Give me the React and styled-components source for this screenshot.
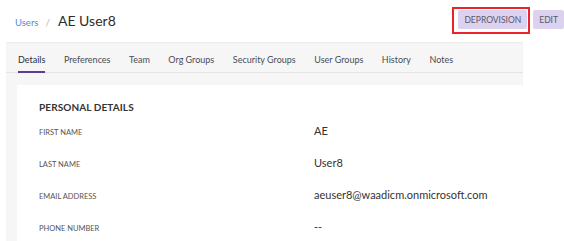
import React from "react";
import styled, { createGlobalStyle } from "styled-components";

const GlobalStyle = createGlobalStyle`
  body {
    margin: 0;
    background: #ffffff;
    font-family: Lato, "Open Sans", sans-serif;
  }
`;

const tabs = [
  "Details",
  "Preferences",
  "Team",
  "Org Groups",
  "Security Groups",
  "User Groups",
  "History",
  "Notes",
];

const fields = [
  { label: "First Name", value: "AE" },
  { label: "Last Name", value: "User8" },
  { label: "Email Address", value: "aeuser8@waadicm.onmicrosoft.com" },
  { label: "Phone Number", value: "--" },
];

export default function App() {
  return (
    <>
      <GlobalStyle />
      <StyledPage>
        <StyledHeader>
          <StyledCrumbs>
            <StyledCrumbLink>Users</StyledCrumbLink>
            <StyledSlash>/</StyledSlash>
            <StyledTitle>AE User8</StyledTitle>
          </StyledCrumbs>
          <StyledActions>
            <StyledHighlight>
              <StyledButton>Deprovision</StyledButton>
            </StyledHighlight>
            <StyledButton $offset={3}>Edit</StyledButton>
          </StyledActions>
        </StyledHeader>
        <StyledPanel>
          <StyledTabBar>
            {tabs.map((t, i) => (
              <StyledTab key={t} $active={i === 0}>
                {t}
              </StyledTab>
            ))}
          </StyledTabBar>
          <StyledCard>
            <StyledSectionTitle>Personal Details</StyledSectionTitle>
            {fields.map((f) => (
              <StyledRow key={f.label}>
                <StyledLabel>{f.label}</StyledLabel>
                <StyledValue>{f.value}</StyledValue>
              </StyledRow>
            ))}
          </StyledCard>
        </StyledPanel>
      </StyledPage>
    </>
  );
}

const StyledPage = styled.div`
  width: 564px;
  height: 241px;
  overflow: hidden;
`;

const StyledHeader = styled.div`
  display: flex;
  align-items: flex-start;
  justify-content: space-between;
  height: 42px;
  padding-left: 15px;
  box-sizing: border-box;
`;

const StyledCrumbs = styled.div`
  display: flex;
  align-items: baseline;
  margin-top: 12px;
`;

const StyledCrumbLink = styled.span`
  font-size: 9.5px;
  color: #4a90d6;
`;

const StyledSlash = styled.span`
  font-size: 10px;
  color: #b8b8b8;
  margin: 0 8px 0 7px;
`;

const StyledTitle = styled.span`
  font-size: 14px;
  color: #2e2e2e;
`;

const StyledActions = styled.div`
  display: flex;
  align-items: flex-start;
  margin-top: 7px;
`;

const StyledHighlight = styled.div`
  display: flex;
  border: 2px solid #e8252a;
  padding: 1px 1px 3px 4px;
  margin-right: 3px;
`;

const StyledButton = styled.button`
  height: 19px;
  margin-top: ${(p) => p.$offset || 0}px;
  padding: 0 6px;
  border: none;
  border-radius: 2px;
  background: #dcd1ee;
  color: #5b5868;
  font-family: Lato, "Open Sans", sans-serif;
  font-size: 8.5px;
  text-transform: uppercase;
`;

const StyledPanel = styled.div`
  margin-left: 6px;
  width: 517px;
  background: #f6f6f6;
  box-shadow: inset 0 1px 1px #ececec;
`;

const StyledTabBar = styled.div`
  display: flex;
  align-items: flex-end;
  gap: 18.5px;
  height: 30px;
  padding-left: 12px;
  border-bottom: 1px solid #e4e4e4;
`;

const StyledTab = styled.div`
  font-size: 9px;
  color: ${(p) => (p.$active ? "#2f2f3a" : "#4b4b55")};
  padding-bottom: 6px;
  border-bottom: 2px solid ${(p) => (p.$active ? "#5b3e91" : "transparent")};
  margin-bottom: -1px;
`;

const StyledCard = styled.div`
  margin-top: 12px;
  margin-left: 11px;
  background: #ffffff;
  padding: 16px 0 0 22px;
  height: 200px;
`;

const StyledSectionTitle = styled.div`
  font-size: 10px;
  font-weight: 700;
  color: #333333;
  text-transform: uppercase;
  letter-spacing: 0.1px;
  margin-bottom: 11px;
`;

const StyledRow = styled.div`
  display: grid;
  grid-template-columns: 275px 1fr;
  align-items: baseline;
  height: 32px;
`;

const StyledLabel = styled.div`
  font-size: 7.5px;
  color: #555555;
  text-transform: uppercase;
`;

const StyledValue = styled.div`
  font-size: 11px;
  color: #333333;
`;
